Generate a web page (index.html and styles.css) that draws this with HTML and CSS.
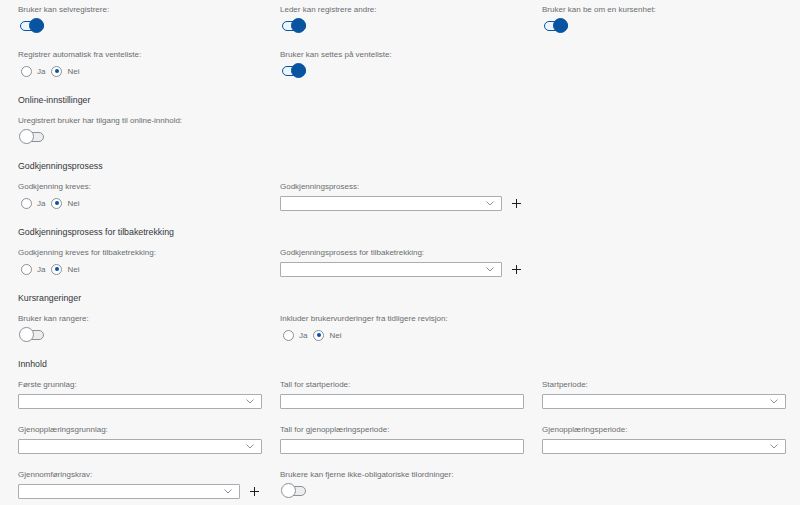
FILE: index.html
```html
<!DOCTYPE html>
<html lang="no">
<head>
    <meta charset="UTF-8">
    <meta name="viewport" content="width=device-width, initial-scale=1.0">
    <title>Kursinnstillinger</title>
    <link rel="stylesheet" href="styles.css">
</head>
<body>
    <div class="grid">
        <div class="field">
            <label class="label">Bruker kan selvregistrere:</label>
            <div class="control"><span class="switch on"></span></div>
        </div>
        <div class="field">
            <label class="label">Leder kan registrere andre:</label>
            <div class="control"><span class="switch on"></span></div>
        </div>
        <div class="field">
            <label class="label">Bruker kan be om en kursenhet:</label>
            <div class="control"><span class="switch on"></span></div>
        </div>
        <div class="field">
            <label class="label">Registrer automatisk fra venteliste:</label>
            <div class="control radios">
                <span class="radio"></span><span class="radio-text">Ja</span>
                <span class="radio checked"></span><span class="radio-text">Nei</span>
            </div>
        </div>
        <div class="field">
            <label class="label">Bruker kan settes på venteliste:</label>
            <div class="control"><span class="switch on"></span></div>
        </div>
    </div>

    <h3 class="section-title">Online-innstillinger</h3>
    <div class="grid">
        <div class="field">
            <label class="label">Uregistrert bruker har tilgang til online-innhold:</label>
            <div class="control"><span class="switch"></span></div>
        </div>
    </div>

    <h3 class="section-title">Godkjenningsprosess</h3>
    <div class="grid">
        <div class="field">
            <label class="label">Godkjenning kreves:</label>
            <div class="control radios">
                <span class="radio"></span><span class="radio-text">Ja</span>
                <span class="radio checked"></span><span class="radio-text">Nei</span>
            </div>
        </div>
        <div class="field">
            <label class="label">Godkjenningsprosess:</label>
            <div class="control">
                <div class="select short">
                    <svg class="chevron" width="8" height="5" viewBox="0 0 8 5"><path d="M0.5 0.5 L4 4 L7.5 0.5" fill="none" stroke="#89919a" stroke-width="1"/></svg>
                </div>
                <span class="add"></span>
            </div>
        </div>
    </div>

    <h3 class="section-title">Godkjenningsprosess for tilbaketrekking</h3>
    <div class="grid">
        <div class="field">
            <label class="label">Godkjenning kreves for tilbaketrekking:</label>
            <div class="control radios">
                <span class="radio"></span><span class="radio-text">Ja</span>
                <span class="radio checked"></span><span class="radio-text">Nei</span>
            </div>
        </div>
        <div class="field">
            <label class="label">Godkjenningsprosess for tilbaketrekking:</label>
            <div class="control">
                <div class="select short">
                    <svg class="chevron" width="8" height="5" viewBox="0 0 8 5"><path d="M0.5 0.5 L4 4 L7.5 0.5" fill="none" stroke="#89919a" stroke-width="1"/></svg>
                </div>
                <span class="add"></span>
            </div>
        </div>
    </div>

    <h3 class="section-title">Kursrangeringer</h3>
    <div class="grid">
        <div class="field">
            <label class="label">Bruker kan rangere:</label>
            <div class="control"><span class="switch"></span></div>
        </div>
        <div class="field">
            <label class="label">Inkluder brukervurderinger fra tidligere revisjon:</label>
            <div class="control radios">
                <span class="radio"></span><span class="radio-text">Ja</span>
                <span class="radio checked"></span><span class="radio-text">Nei</span>
            </div>
        </div>
    </div>

    <h3 class="section-title">Innhold</h3>
    <div class="grid">
        <div class="field">
            <label class="label">Første grunnlag:</label>
            <div class="control">
                <div class="select">
                    <svg class="chevron" width="8" height="5" viewBox="0 0 8 5"><path d="M0.5 0.5 L4 4 L7.5 0.5" fill="none" stroke="#89919a" stroke-width="1"/></svg>
                </div>
            </div>
        </div>
        <div class="field">
            <label class="label">Tall for startperiode:</label>
            <div class="control"><input class="input" type="text"></div>
        </div>
        <div class="field">
            <label class="label">Startperiode:</label>
            <div class="control">
                <div class="select">
                    <svg class="chevron" width="8" height="5" viewBox="0 0 8 5"><path d="M0.5 0.5 L4 4 L7.5 0.5" fill="none" stroke="#89919a" stroke-width="1"/></svg>
                </div>
            </div>
        </div>
        <div class="field">
            <label class="label">Gjenopplæringsgrunnlag:</label>
            <div class="control">
                <div class="select">
                    <svg class="chevron" width="8" height="5" viewBox="0 0 8 5"><path d="M0.5 0.5 L4 4 L7.5 0.5" fill="none" stroke="#89919a" stroke-width="1"/></svg>
                </div>
            </div>
        </div>
        <div class="field">
            <label class="label">Tall for gjenopplæringsperiode:</label>
            <div class="control"><input class="input" type="text"></div>
        </div>
        <div class="field">
            <label class="label">Gjenopplæringsperiode:</label>
            <div class="control">
                <div class="select">
                    <svg class="chevron" width="8" height="5" viewBox="0 0 8 5"><path d="M0.5 0.5 L4 4 L7.5 0.5" fill="none" stroke="#89919a" stroke-width="1"/></svg>
                </div>
            </div>
        </div>
        <div class="field">
            <label class="label">Gjennomføringskrav:</label>
            <div class="control">
                <div class="select short">
                    <svg class="chevron" width="8" height="5" viewBox="0 0 8 5"><path d="M0.5 0.5 L4 4 L7.5 0.5" fill="none" stroke="#89919a" stroke-width="1"/></svg>
                </div>
                <span class="add"></span>
            </div>
        </div>
        <div class="field">
            <label class="label">Brukere kan fjerne ikke-obligatoriske tilordninger:</label>
            <div class="control"><span class="switch"></span></div>
        </div>
    </div>
</body>
</html>
```

FILE: styles.css
```css
body {
    margin: 0;
    padding: 4px 14px 0 18px;
    background-color: #f7f7f7;
    font-family: "Liberation Sans", Arial, sans-serif;
    color: #32363a;
}

.grid {
    display: grid;
    grid-template-columns: repeat(3, 244px);
    column-gap: 18px;
    row-gap: 15px;
    margin-bottom: 15px;
}

.field {
    display: flex;
    flex-direction: column;
    gap: 2px;
}

.label {
    font-size: 8px;
    line-height: 12px;
    color: #6a6d70;
    white-space: nowrap;
}

.section-title {
    margin: 0 0 9px 0;
    font-size: 8.8px;
    line-height: 12px;
    font-weight: normal;
    color: #32363a;
}

.control {
    height: 16px;
    display: flex;
    align-items: center;
}

/* switch */
.switch {
    position: relative;
    width: 27px;
    height: 16px;
    display: block;
}

.switch::before {
    content: "";
    position: absolute;
    left: 2px;
    top: 3px;
    width: 22px;
    height: 8px;
    border: 1px solid #89919a;
    border-radius: 6px;
    background: #ededed;
}

.switch::after {
    content: "";
    position: absolute;
    left: 1px;
    top: 0;
    width: 13px;
    height: 13px;
    border: 1px solid #89919a;
    border-radius: 50%;
    background: #fff;
}

.switch.on::before {
    border-color: #0854a0;
    background: #ebf5fe;
}

.switch.on::after {
    left: 11px;
    border-color: #0854a0;
    background: #0854a0;
}

/* radio */
.radio {
    width: 9px;
    height: 9px;
    margin-left: 3px;
    border: 1px solid #89919a;
    border-radius: 50%;
    background: #fff;
    position: relative;
}

.radio.checked::after {
    content: "";
    position: absolute;
    left: 2.5px;
    top: 2.5px;
    width: 4px;
    height: 4px;
    border-radius: 50%;
    background: #0854a0;
}

.radio-text {
    font-size: 8px;
    color: #6a6d70;
    margin: 0 3px 0 5px;
}

/* select and input */
.select,
.input {
    box-sizing: border-box;
    width: 244px;
    height: 15px;
    border: 1px solid #a9adb1;
    border-radius: 1px;
    background: #fff;
    margin: 0;
    padding: 0;
}

.select {
    position: relative;
}

.select.short {
    width: 222px;
}

.chevron {
    position: absolute;
    right: 7px;
    top: 4px;
}

.add {
    position: relative;
    width: 9px;
    height: 9px;
    margin-left: 10px;
}

.add::before,
.add::after {
    content: "";
    position: absolute;
    background: #1d1d1d;
}

.add::before {
    left: 0;
    top: 4px;
    width: 9px;
    height: 1.5px;
}

.add::after {
    left: 3.75px;
    top: 0;
    width: 1.5px;
    height: 9px;
}
```
